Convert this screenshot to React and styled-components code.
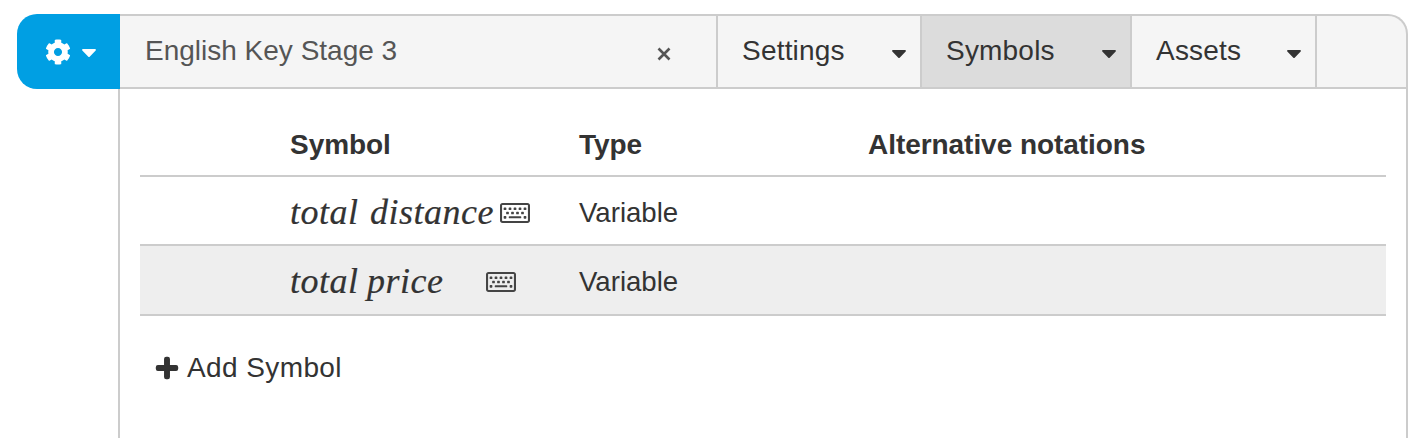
import React from 'react';
import styled, { createGlobalStyle } from 'styled-components';
import { FaCog, FaCaretDown, FaPlus, FaRegKeyboard } from 'react-icons/fa';

const Global = createGlobalStyle`
  html, body { margin: 0; padding: 0; background: #fff; overflow: hidden; }
  body { font-family: "Liberation Sans", Arial, sans-serif; color: #333; }
`;

const Page = styled.div`
  width: 1418px;
  height: 438px;
  box-sizing: border-box;
  padding: 14px 10px 0 17px;
  overflow: hidden;
`;

const Toolbar = styled.div`
  display: flex;
  height: 75px;
`;

const MenuButton = styled.div`
  flex: 0 0 103px;
  box-sizing: border-box;
  display: flex;
  align-items: center;
  justify-content: center;
  gap: 6px;
  padding-left: 9px;
  background: #009fe3;
  color: #fff;
  border-radius: 20px 0 0 20px;
  font-size: 26px;
  svg:last-child { font-size: 24px; }
`;

const Bar = styled.div`
  flex: 1;
  display: flex;
  box-sizing: border-box;
  background: #f5f5f5;
  border: solid #cccccc;
  border-width: 2px 2px 2px 0;
  border-top-right-radius: 20px;
`;

const TitleField = styled.div`
  flex: 0 0 598px;
  box-sizing: border-box;
  display: flex;
  align-items: center;
  justify-content: space-between;
  padding: 0 45px 0 25px;
  border-right: 2px solid #cccccc;
  font-size: 28px;
  color: #555;
`;

const BarLabel = styled.span`
  position: relative;
  top: -1px;
`;

const Clear = styled.svg`
  width: 14px;
  height: 14px;
  position: relative;
  top: 2px;
  stroke: #555;
  stroke-width: 2.6;
`;

const Tab = styled.div`
  flex: 0 0 ${p => p.$w}px;
  box-sizing: border-box;
  display: flex;
  align-items: center;
  justify-content: space-between;
  padding: 0 9px 0 24px;
  border-right: 2px solid #cccccc;
  background: ${p => (p.$active ? '#dcdcdc' : 'transparent')};
  font-size: 28px;
  letter-spacing: 0.2px;
  color: #333;
  svg { font-size: 24px; position: relative; top: 1px; }
`;

const Content = styled.div`
  margin-left: 101px;
  height: 349px;
  box-sizing: border-box;
  border: solid #cccccc;
  border-width: 0 2px;
  padding: 0 20px;
`;

const Row = styled.div`
  display: grid;
  box-sizing: border-box;
  grid-template-columns: 150px 289px 289px 1fr;
  align-items: center;
  height: ${p => p.$h}px;
  padding-top: ${p => p.$pad || 0}px;
  border-bottom: 2px solid #cccccc;
  background: ${p => (p.$shaded ? '#eeeeee' : 'transparent')};
  font-size: 28px;
`;

const HeadCell = styled.div`
  font-weight: 700;
  letter-spacing: -0.05px;
  position: relative;
  top: 1px;
`;

const SymbolCell = styled.div`
  display: flex;
  align-items: center;
`;

const MathName = styled.span`
  font-family: "Liberation Serif", "DejaVu Serif", serif;
  font-style: italic;
  font-size: 36px;
  letter-spacing: 0.5px;
  word-spacing: ${p => p.$ws}px;
  width: ${p => p.$w}px;
  white-space: pre;
  -webkit-text-stroke: 0.2px #333;
  position: relative;
  top: 1px;
`;

const KeyIcon = styled(FaRegKeyboard)`
  font-size: 30px;
  color: #444;
  position: relative;
  top: 2px;
`;

const TypeCell = styled.div`
  font-size: 27.6px;
  position: relative;
  top: 2px;
`;

const AddLink = styled.div`
  display: flex;
  align-items: center;
  gap: 8px;
  margin: 36px 0 0 15px;
  font-size: 28px;
  letter-spacing: 0.4px;
  svg { font-size: 24px; stroke: currentColor; stroke-width: 30px; }
`;

const rows = [
  { name: 'total distance', ws: 2, w: 210, shaded: false, h: 69 },
  { name: 'total price', ws: -1, w: 196, shaded: true, h: 70 },
];

export default function App() {
  return (
    <Page>
      <Global />
      <Toolbar>
        <MenuButton><FaCog /><FaCaretDown /></MenuButton>
        <Bar>
          <TitleField>
            <BarLabel>English Key Stage 3</BarLabel>
            <Clear viewBox="0 0 14 14"><path d="M1.5 1.5 12.5 12.5M12.5 1.5 1.5 12.5" /></Clear>
          </TitleField>
          <Tab $w={204}><BarLabel>Settings</BarLabel><FaCaretDown /></Tab>
          <Tab $w={210} $active><BarLabel>Symbols</BarLabel><FaCaretDown /></Tab>
          <Tab $w={185}><BarLabel>Assets</BarLabel><FaCaretDown /></Tab>
        </Bar>
      </Toolbar>
      <Content>
        <Row $h={88} $pad={24}>
          <span />
          <HeadCell>Symbol</HeadCell>
          <HeadCell>Type</HeadCell>
          <HeadCell>Alternative notations</HeadCell>
        </Row>
        {rows.map(r => (
          <Row key={r.name} $h={r.h} $shaded={r.shaded}>
            <span />
            <SymbolCell>
              <MathName $ws={r.ws} $w={r.w}>{r.name}</MathName>
              <KeyIcon />
            </SymbolCell>
            <TypeCell>Variable</TypeCell>
            <span />
          </Row>
        ))}
        <AddLink><FaPlus />Add Symbol</AddLink>
      </Content>
    </Page>
  );
}
